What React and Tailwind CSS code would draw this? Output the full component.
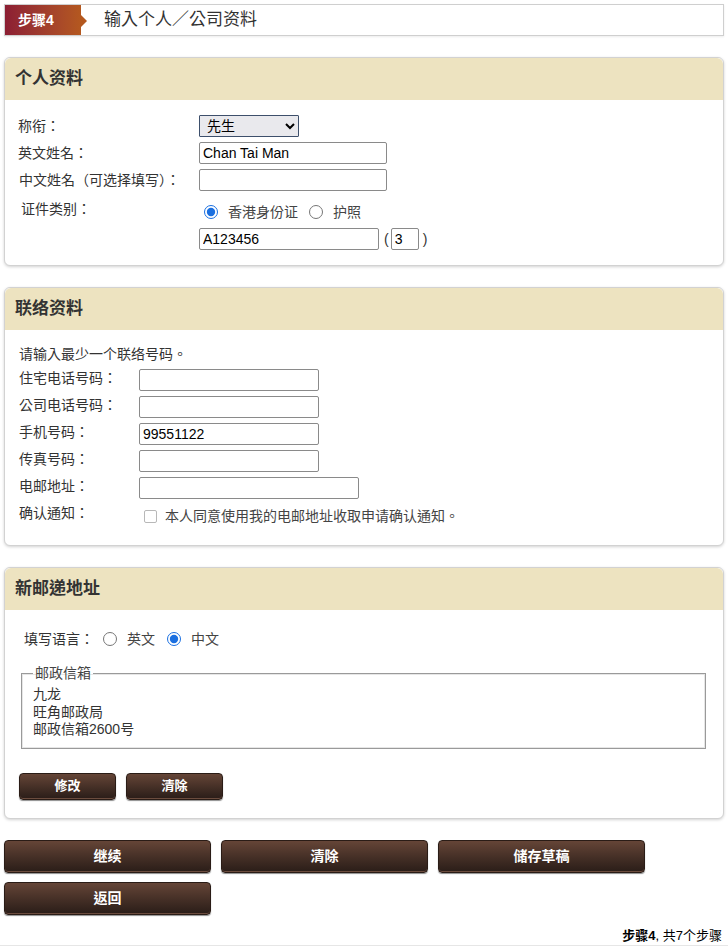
import React from "react";

const cjk = "font-['Liberation_Sans','Noto_Sans_CJK_TC',sans-serif]";

const Btn = ({ children, className = "" }) => (
  <button
    className={`rounded-[4px] border border-[#2a1c16] bg-gradient-to-b from-[#654537] to-[#2a1d18] font-bold text-white shadow-[0_1px_1px_rgba(0,0,0,0.45),inset_0_-1px_0_#6b4c3e] ${className}`}
  >
    {children}
  </button>
);

const Card = ({ title, children, className = "" }) => (
  <div className={`rounded-md border border-[#d2d2d2] bg-white shadow-[0_1px_3px_rgba(0,0,0,0.18)] ${className}`}>
    <div className="flex h-[42px] items-center rounded-t-md bg-[#ede3c0] px-[10px]">
      <h2 className="text-[17px] font-bold text-[#333]">{title}</h2>
    </div>
    {children}
  </div>
);

const Field = ({ w = "w-[188px]", value = "" }) => (
  <input
    type="text"
    defaultValue={value}
    className={`h-[22px] ${w} rounded-[2px] border border-[#8a8a8a] px-[3px] text-[14px] text-black outline-none`}
  />
);

const Radio = ({ name, checked, label }) => (
  <label className="flex items-center">
    <input type="radio" name={name} defaultChecked={checked} className="m-0 h-[14px] w-[14px] accent-[#1a6fe0]" />
    <span className="ml-[10px] text-[14px] text-[#444]">{label}</span>
  </label>
);

export default function App() {
  return (
    <div className={`${cjk} min-h-[946px] bg-white text-[#333]`}>
      <div className="px-1 pt-1">
        {/* step header */}
        <div className="flex h-[32px] items-stretch border border-[#cfcfcf] shadow-[0_1px_2px_rgba(0,0,0,0.08)]">
          <div className="flex w-[76px] items-center bg-gradient-to-r from-[#8c1e33] to-[#b4581f] pl-[13px] text-[14px] font-bold text-white">
            步骤4
          </div>
          <svg width="7" height="30" viewBox="0 0 7 30" className="shrink-0">
            <polygon points="0,10 6,16 0,22" fill="#b4581f" />
          </svg>
          <div className="flex items-center pl-[16px] text-[17px] text-[#333]">输入个人／公司资料</div>
        </div>

        {/* personal */}
        <Card title="个人资料" className="mt-[21px]">
          <div className="flex flex-col gap-[5px] pb-[15px] pl-[13px] pt-[15px] text-[14px]">
            <div className="flex h-[22px] items-center">
              <span className="w-[181px]">称衔：</span>
              <select
                defaultValue="先生"
                className="h-[22px] w-[100px] rounded-[1px] border border-[#3d4f6b] bg-[#e9e9ed] pl-[3px] text-[14px] text-black"
              >
                <option>先生</option>
                <option>女士</option>
              </select>
            </div>
            <div className="flex h-[22px] items-center">
              <span className="w-[181px]">英文姓名：</span>
              <Field value="Chan Tai Man" />
            </div>
            <div className="flex h-[22px] items-center">
              <span className="w-[181px] pl-[1px]">中文姓名（可选择填写）：</span>
              <Field />
            </div>
            <div className="flex">
              <span className="mt-[4px] w-[181px] pl-[3px] leading-[18px]">证件类别：</span>
              <div className="flex flex-col">
                <div className="mt-[6px] flex h-[20px] items-center gap-[11px] pl-[5px]">
                  <Radio name="idtype" checked label="香港身份证" />
                  <Radio name="idtype" label="护照" />
                </div>
                <div className="mt-[6px] flex h-[22px] items-center">
                  <Field w="w-[180px]" value="A123456" />
                  <span className="ml-[5px] mr-[2px]">(</span>
                  <Field w="w-[28px]" value="3" />
                  <span className="ml-[4px]">)</span>
                </div>
              </div>
            </div>
          </div>
        </Card>

        {/* contact */}
        <Card title="联络资料" className="mt-[21px]">
          <div className="flex flex-col gap-[5px] pb-[19px] pl-[14px] pt-[15px] text-[14px]">
            <p className="mb-[1px] leading-[18px]">请输入最少一个联络号码。</p>
            {[
              ["住宅电话号码：", "", "w-[180px]"],
              ["公司电话号码：", "", "w-[180px]"],
              ["手机号码：", "99551122", "w-[180px]"],
              ["传真号码：", "", "w-[180px]"],
              ["电邮地址：", "", "w-[220px]"],
            ].map(([l, v, w]) => (
              <div key={l} className="flex h-[22px] items-center">
                <span className="w-[120px] self-start leading-[18px]">{l}</span>
                <Field w={w} value={v} />
              </div>
            ))}
            <div className="flex h-[22px] items-center">
              <span className="w-[120px] self-start leading-[18px]">确认通知：</span>
              <label className="ml-[5px] mt-[3px] flex items-center">
                <input
                  type="checkbox"
                  className="m-0 h-[13px] w-[13px] appearance-none rounded-[2px] border border-[#b8b8b8] bg-white"
                />
                <span className="ml-[8px] text-[#444]">本人同意使用我的电邮地址收取申请确认通知。</span>
              </label>
            </div>
          </div>
        </Card>

        {/* address */}
        <Card title="新邮递地址" className="mt-[21px]">
          <div className="pb-[18px] pl-[14px] pr-[17px] pt-[19px] text-[14px]">
            <div className="flex h-[20px] items-center pl-[5px]">
              <span className="mr-[9px]">填写语言：</span>
              <div className="flex items-center gap-[12px]">
                <Radio name="lang" label="英文" />
                <Radio name="lang" checked label="中文" />
              </div>
            </div>
            <fieldset className="ml-[2px] mt-[15px] border border-[#9a9a9a] px-[11px] pb-[9px] pt-[4px] shadow-[inset_0_0_0_1px_#e6e6e6]">
              <legend className="px-[2px] leading-[18px] text-[#444]">邮政信箱</legend>
              <div className="leading-[17.5px] text-[#333]">
                <div>九龙</div>
                <div>旺角邮政局</div>
                <div>邮政信箱2600号</div>
              </div>
            </fieldset>
            <div className="mt-[24px] flex gap-[10px]">
              <Btn className="h-[27px] w-[97px] text-[13px]">修改</Btn>
              <Btn className="h-[27px] w-[97px] text-[13px]">清除</Btn>
            </div>
          </div>
        </Card>

        {/* actions */}
        <div className="mt-[21px] grid grid-cols-[207px_207px_207px] gap-x-[10px] gap-y-[9px]">
          <Btn className="h-[33px] text-[14px]">继续</Btn>
          <Btn className="h-[33px] text-[14px]">清除</Btn>
          <Btn className="h-[33px] text-[14px]">储存草稿</Btn>
          <Btn className="h-[33px] text-[14px]">返回</Btn>
        </div>

        <div className="mt-[13px] pr-[2px] text-right text-[13px] leading-[16px] text-black">
          <span className="font-bold">步骤4</span>, 共7个步骤
        </div>
      </div>
      <div className="mt-[1px] h-[5px] bg-[#e6e6e6]" />
    </div>
  );
}
